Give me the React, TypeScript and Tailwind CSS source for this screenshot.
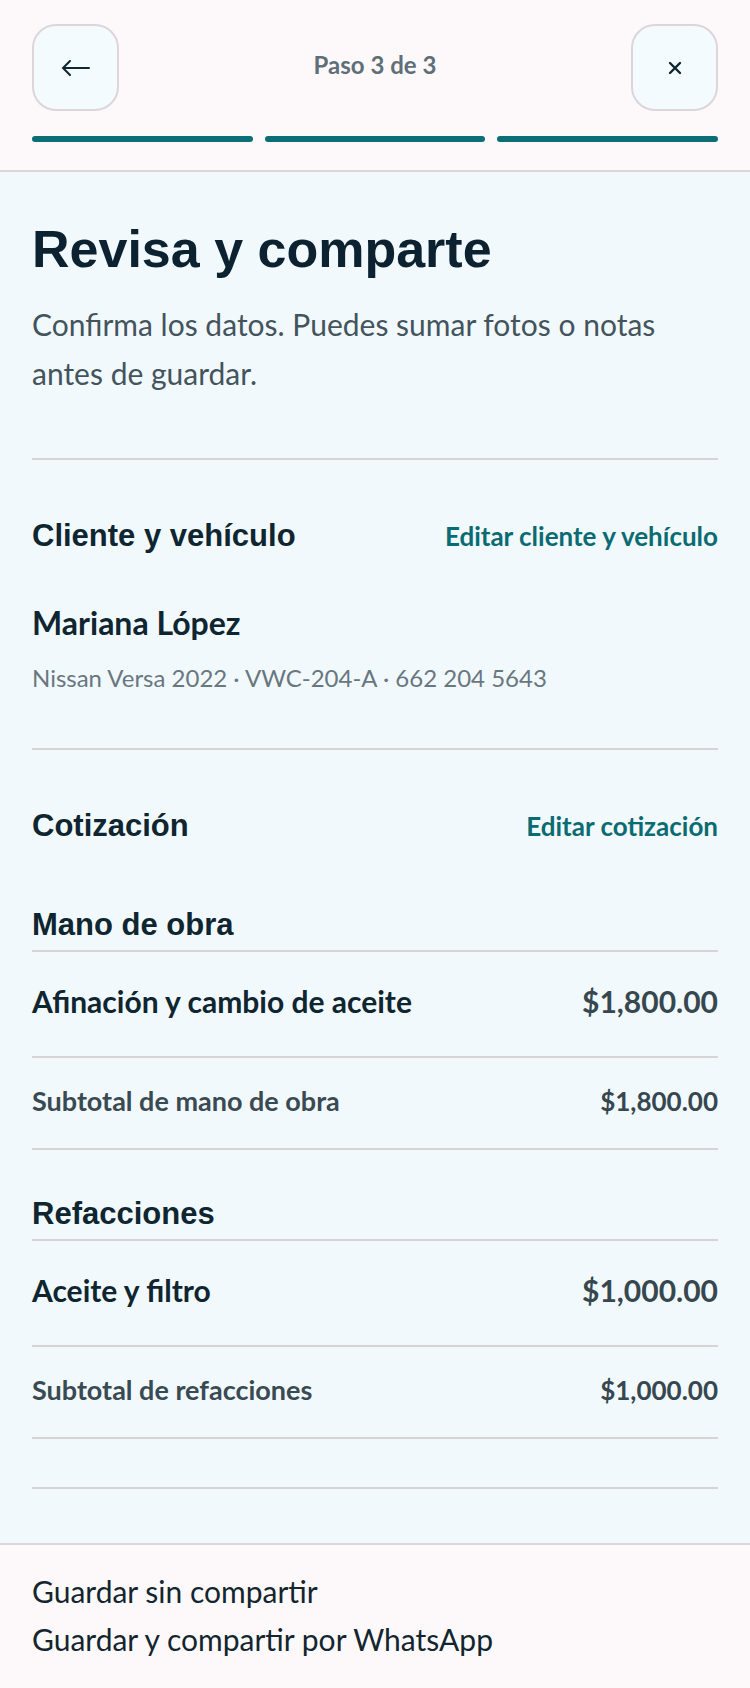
import { type ReactNode } from "react";

const BODY = "font-['Lato','Noto_Sans',sans-serif]";
const DISPLAY = "font-['Liberation_Sans','Arial',sans-serif]";

function IconButton({ children, label }: { children: ReactNode; label: string }) {
  return (
    <button
      aria-label={label}
      className="flex h-[87px] w-[87px] items-center justify-center rounded-[24px] border-2 border-[#ddd5da] bg-[#f4fbfe] text-[#0f2530]"
    >
      {children}
    </button>
  );
}

function SectionHeader({ title, action }: { title: string; action: string }) {
  return (
    <div className="flex items-center justify-between">
      <h2 className={`${DISPLAY} text-[31px] font-bold leading-[36px] text-[#0f2530]`}>
        {title}
      </h2>
      <button className={`${BODY} text-[26px] font-bold leading-[36px] text-[#0b6b72]`}>
        {action}
      </button>
    </div>
  );
}

function GroupTitle({ children }: { children: ReactNode }) {
  return (
    <div className="border-b-2 border-[#d8d3d7] pb-[7px]">
      <h3 className={`${DISPLAY} text-[31px] font-bold leading-[36px] text-[#0f2530]`}>
        {children}
      </h3>
    </div>
  );
}

function LineItem({ name, price }: { name: string; price: string }) {
  return (
    <div className="flex h-[106px] items-center justify-between border-b-2 border-[#d8d3d7]">
      <span className="-mt-[5px] text-[30px] font-bold text-[#0f2530]">{name}</span>
      <span className="-mt-[5px] text-[30px] font-bold text-[#37474f]">{price}</span>
    </div>
  );
}

function Subtotal({ label, price }: { label: string; price: string }) {
  return (
    <div className="flex h-[92px] items-center justify-between border-b-2 border-[#d8d3d7]">
      <span className="-mt-[4px] text-[27px] font-bold text-[#3a4a52]">{label}</span>
      <span className="-mt-[4px] text-[26px] font-bold text-[#37474f]">{price}</span>
    </div>
  );
}

export default function App() {
  return (
    <div className={`${BODY} flex min-h-screen flex-col bg-[#f1f9fd]`}>
      {/* header */}
      <header className="border-b-2 border-[#ddd5da] bg-[#fdf9fb] px-[32px] pt-[24px] pb-[28px]">
        <div className="flex items-center justify-between">
          <IconButton label="Atrás">
            <svg width="30" height="16" viewBox="0 0 30 16" fill="none" stroke="currentColor" strokeWidth="2" strokeLinecap="round">
              <path d="M2 8h26M9 1L2 8l7 7" />
            </svg>
          </IconButton>
          <span className="-mt-[6px] text-[24px] font-bold text-[#5f6f78]">Paso 3 de 3</span>
          <IconButton label="Cerrar">
            <svg width="14" height="14" viewBox="0 0 14 14" fill="none" stroke="currentColor" strokeWidth="2.4" strokeLinecap="round">
              <path d="M2 2l10 10M12 2L2 12" />
            </svg>
          </IconButton>
        </div>
        <div className="mt-[25px] grid grid-cols-3 gap-[12px]">
          <div className="h-[6px] rounded-full bg-[#0b6e77]" />
          <div className="h-[6px] rounded-full bg-[#0b6e77]" />
          <div className="h-[6px] rounded-full bg-[#0b6e77]" />
        </div>
      </header>

      {/* body */}
      <main className="flex-1 px-[32px] pt-[47px]">
        <h1 className={`${DISPLAY} text-[52px] font-bold leading-[60px] text-[#0d2230]`}>
          Revisa y comparte
        </h1>
        <p className="mt-[21px] text-[30px] leading-[49px] text-[#44545c]">
          Confirma los datos. Puedes sumar fotos o notas antes de guardar.
        </p>

        <section className="mt-[60px] border-t-2 border-[#d8d3d7] pt-[58px] pb-[52px]">
          <SectionHeader title="Cliente y vehículo" action="Editar cliente y vehículo" />
          <div className="mt-[49px] text-[32px] font-bold leading-[40px] text-[#0f2530]">
            Mariana López
          </div>
          <div className="mt-[17px] text-[24px] leading-[36px] text-[#69777f]">
            Nissan Versa 2022 · VWC-204-A · 662 204 5643
          </div>
        </section>

        <section className="border-t-2 border-[#d8d3d7] pt-[58px]">
          <SectionHeader title="Cotización" action="Editar cotización" />

          <div className="mt-[63px]">
            <GroupTitle>Mano de obra</GroupTitle>
            <LineItem name="Afinación y cambio de aceite" price="$1,800.00" />
            <Subtotal label="Subtotal de mano de obra" price="$1,800.00" />
          </div>

          <div className="mt-[46px]">
            <GroupTitle>Refacciones</GroupTitle>
            <LineItem name="Aceite y filtro" price="$1,000.00" />
            <Subtotal label="Subtotal de refacciones" price="$1,000.00" />
          </div>

          <div className="mt-[48px] border-t-2 border-[#d8d3d7] pb-[54px]" />
        </section>
      </main>

      {/* footer */}
      <footer className="border-t-2 border-[#ddd5da] bg-[#fdf9fb] px-[32px] pt-[22px] pb-[28px]">
        <button className="block text-left text-[30px] leading-[48px] text-[#13262f]">
          Guardar sin compartir
        </button>
        <button className="block text-left text-[30px] leading-[48px] text-[#13262f]">
          Guardar y compartir por WhatsApp
        </button>
      </footer>
    </div>
  );
}
